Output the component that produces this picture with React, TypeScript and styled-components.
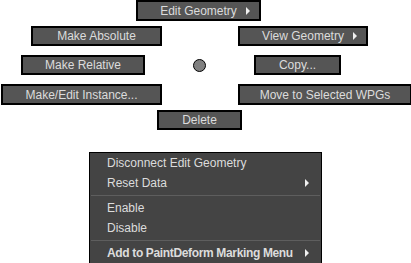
import { FC } from "react";
import styled, { createGlobalStyle } from "styled-components";

const GlobalStyle = createGlobalStyle`
  html, body {
    margin: 0;
    padding: 0;
    background: #ffffff;
  }
  body {
    font-family: "Liberation Sans", Arial, sans-serif;
    font-size: 12px;
  }
`;

const Page = styled.div`
  width: 411px;
  height: 263px;
  overflow: hidden;
  display: flex;
  flex-direction: column;
`;

// radial marking menu: item positions are the content itself
const Radial = styled.div`
  position: relative;
  width: 411px;
  height: 131px;
  flex: none;
`;

const RadialItem = styled.div<{ $x: number; $y: number; $w: number; $h?: number }>`
  position: absolute;
  left: ${(p) => p.$x}px;
  top: ${(p) => p.$y}px;
  width: ${(p) => p.$w}px;
  height: ${(p) => p.$h ?? 20}px;
  box-sizing: border-box;
  border: 2px solid #000;
  background: #555555;
  color: #dcdcdc;
  display: flex;
  align-items: center;
  justify-content: center;
  font-size: 12px;
  white-space: nowrap;
`;

const SubArrow = styled.span<{ $right?: number }>`
  position: absolute;
  right: ${(p) => p.$right ?? 9}px;
  top: 50%;
  margin-top: -4px;
  width: 0;
  height: 0;
  border-top: 4px solid transparent;
  border-bottom: 4px solid transparent;
  border-left: 4px solid #f0f0f0;
`;

const Hub = styled.div`
  position: absolute;
  left: 193px;
  top: 59px;
  width: 13px;
  height: 13px;
  box-sizing: border-box;
  border-radius: 50%;
  border: 1px solid #000;
  background: #808080;
`;

const Menu = styled.div`
  margin: 21px 0 0 89px;
  width: 233px;
  box-sizing: border-box;
  border: 1px solid #000;
  background: #444444;
  color: #dcdcdc;
  display: flex;
  flex-direction: column;
`;

const MenuRow = styled.div<{ $bold?: boolean }>`
  position: relative;
  height: 20px;
  line-height: 20px;
  padding-left: 17px;
  font-size: 12px;
  font-weight: ${(p) => (p.$bold ? 700 : 400)};
  letter-spacing: ${(p) => (p.$bold ? "-0.35px" : "0")};
  white-space: nowrap;
`;

const Separator = styled.div`
  height: 1px;
  margin: 2px 1px 2px 1px;
  background: #5e5e5e;
`;

type Item = { label: string; x: number; y: number; w: number; h?: number; sub?: boolean };

const items: Item[] = [
  { label: "Edit Geometry", x: 136, y: 0, w: 125, h: 21, sub: true },
  { label: "Make Absolute", x: 31, y: 26, w: 131 },
  { label: "View Geometry", x: 238, y: 26, w: 130, sub: true },
  { label: "Make Relative", x: 21, y: 55, w: 124 },
  { label: "Copy...", x: 254, y: 55, w: 87 },
  { label: "Make/Edit Instance...", x: 1, y: 84, w: 161, h: 21 },
  { label: "Move to Selected WPGs", x: 238, y: 84, w: 174, h: 21 },
  { label: "Delete", x: 157, y: 110, w: 85 },
];

const App: FC = () => {
  return (
    <>
      <GlobalStyle />
      <Page>
        <Radial>
          {items.map((it) => (
            <RadialItem key={it.label} $x={it.x} $y={it.y} $w={it.w} $h={it.h}>
              {it.label}
              {it.sub && <SubArrow />}
            </RadialItem>
          ))}
          <Hub />
        </Radial>
        <Menu>
          <MenuRow>Disconnect Edit Geometry</MenuRow>
          <MenuRow>
            Reset Data
            <SubArrow $right={12} />
          </MenuRow>
          <Separator />
          <MenuRow>Enable</MenuRow>
          <MenuRow>Disable</MenuRow>
          <Separator />
          <MenuRow $bold>
            Add to PaintDeform Marking Menu
            <SubArrow $right={12} />
          </MenuRow>
        </Menu>
      </Page>
    </>
  );
};

export default App;
